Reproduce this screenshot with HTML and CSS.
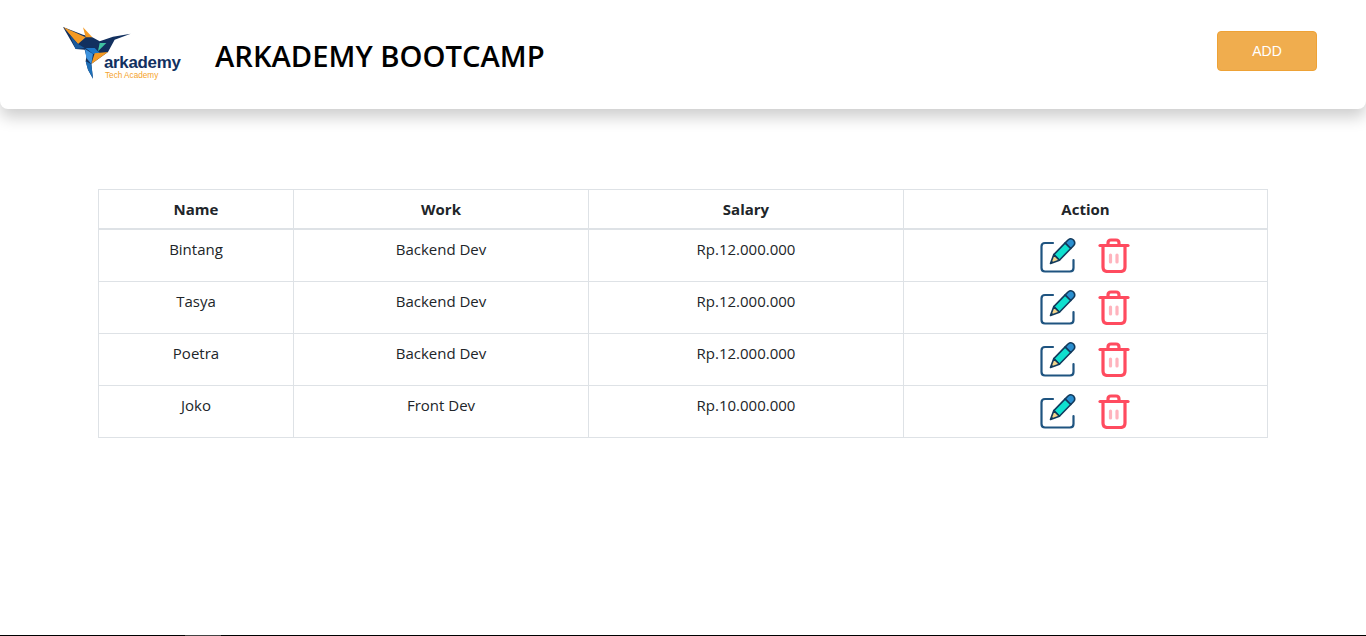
FILE: index.html
```html
<!DOCTYPE html>
<html lang="en">
<head>
<meta charset="utf-8">
<title>Arkademy Bootcamp</title>
<link rel="stylesheet" href="styles.css">
</head>
<body>
<div class="page">
<header class="topbar">
  <div class="logo">
    <svg class="bird" width="70" height="55" viewBox="40 37 210 165">
      <polygon points="40,37 100,60 128,68 150,80 190,66 243,57 195,75 175,112 150,130 125,148 130,192 115,165 108,140 110,125 105,105 78,103" fill="#12305f"/>
      <polygon points="42,38 108,68 85,88" fill="#f59a23"/>
      <polygon points="100,38 128,68 108,68" fill="#f59a23"/>
      <polygon points="60,62 85,88 105,100 78,103" fill="#1b5a9c"/>
      <polygon points="108,100 135,100 150,115 130,118" fill="#1f78c8"/>
      <polygon points="150,85 170,85 145,110" fill="#3fc3a2"/>
      <polygon points="135,116 175,112 150,130 125,148" fill="#f59a23"/>
      <polygon points="106,103 130,118 125,148 110,130" fill="#3d93de"/>
      <polygon points="108,140 125,148 130,192 115,165" fill="#1d6fb8"/>
    </svg>
    <span class="word">arkademy</span>
    <span class="tag">Tech Academy</span>
  </div>
  <h1 class="title">ARKADEMY BOOTCAMP</h1>
  <button class="add">ADD</button>
</header>
<main class="content">
  <table class="grid">
    <colgroup>
      <col class="c1"><col class="c2"><col class="c3"><col class="c4">
    </colgroup>
    <thead>
      <tr><th>Name</th><th>Work</th><th>Salary</th><th>Action</th></tr>
    </thead>
    <tbody>
      <tr><td>Bintang</td><td>Backend Dev</td><td>Rp.12.000.000</td><td class="act"><div class="icons">
        <svg class="ic" width="36" height="36" viewBox="0 0 36 36"><use href="#edit"/></svg>
        <svg class="ic" width="32" height="36" viewBox="0 -1 32 36"><use href="#trash"/></svg></div></td></tr>
      <tr><td>Tasya</td><td>Backend Dev</td><td>Rp.12.000.000</td><td class="act"><div class="icons">
        <svg class="ic" width="36" height="36" viewBox="0 0 36 36"><use href="#edit"/></svg>
        <svg class="ic" width="32" height="36" viewBox="0 -1 32 36"><use href="#trash"/></svg></div></td></tr>
      <tr><td>Poetra</td><td>Backend Dev</td><td>Rp.12.000.000</td><td class="act"><div class="icons">
        <svg class="ic" width="36" height="36" viewBox="0 0 36 36"><use href="#edit"/></svg>
        <svg class="ic" width="32" height="36" viewBox="0 -1 32 36"><use href="#trash"/></svg></div></td></tr>
      <tr><td>Joko</td><td>Front Dev</td><td>Rp.10.000.000</td><td class="act"><div class="icons">
        <svg class="ic" width="36" height="36" viewBox="0 0 36 36"><use href="#edit"/></svg>
        <svg class="ic" width="32" height="36" viewBox="0 -1 32 36"><use href="#trash"/></svg></div></td></tr>
    </tbody>
  </table>
</main>
<div class="baseline"><span class="thumb"></span></div>
</div>
<svg class="defs" width="0" height="0">
  <defs>
    <g id="edit">
      <path d="M13 6H5Q1.500 6 1.500 9.500V31Q1.500 34.500 5 34.500H30Q33.500 34.500 33.500 31V23" fill="none" stroke="#1f5480" stroke-width="2.200" stroke-linecap="round"/>
      <path d="M13.800 17.600L25.200 5.900L30.800 11.500L19.400 23.200Z" fill="#0fe0cf" stroke="#123a5c" stroke-width="1.600" stroke-linejoin="round"/>
      <path d="M25.200 5.900L28 3Q31 0.500 33.500 3Q36 6 33.500 8.700L30.800 11.500Z" fill="#2a8fd0" stroke="#123a5c" stroke-width="1.600" stroke-linejoin="round"/>
      <path d="M13.800 17.600L19.400 23.200L10.500 26.500Z" fill="#f4d58a" stroke="#123a5c" stroke-width="1.600" stroke-linejoin="round"/>
      <path d="M10.500 26.500L11.500 23.500L13.500 25.300Z" fill="#123a5c"/>
    </g>
    <g id="trash">
      <path d="M2 7.500H30" stroke="#ff4b5f" stroke-width="3.200" stroke-linecap="round" fill="none"/>
      <path d="M10 7V5Q10 2 13 2H18Q21 2 21 5V7" stroke="#ff4b5f" stroke-width="3.200" fill="none"/>
      <path d="M5 8V29Q5 33.500 9.500 33.500H22.500Q27 33.500 27 29V8" stroke="#ff4b5f" stroke-width="3.200" fill="none"/>
      <path d="M12.500 17V24M19 17V24" stroke="#ffb3bd" stroke-width="3.200" stroke-linecap="round" fill="none"/>
    </g>
  </defs>
</svg>
</body>
</html>
```
FILE: styles.css
```css
* { box-sizing: border-box; }
html, body { margin: 0; height: 100%; background: #fff; overflow: hidden; }
body { font-family: "Open Sans", "Noto Sans", sans-serif; color: #212529; }
.page { height: 636px; display: flex; flex-direction: column; }
.topbar {
  height: 109px;
  display: flex;
  align-items: center;
  padding: 0 49px 0 63px;
  background: #fff;
  border-radius: 0 0 8px 8px;
  box-shadow: 0 8px 16px rgba(0, 0, 0, 0.2);
}
.logo { position: relative; width: 119px; height: 56px; flex: none; }
.bird { display: block; }
.word {
  position: absolute; left: 41px; top: 26px;
  font: bold 16.900px/20px "Liberation Sans", sans-serif;
  letter-spacing: -0.3px;
  color: #12305f;
}
.tag {
  position: absolute; left: 42px; top: 44px;
  font: 8.200px/10px "Liberation Sans", sans-serif;
  color: #f5a32b;
}
.title {
  margin: 2px 0 0 33px;
  font-size: 29.200px;
  font-weight: 600;
  line-height: 40px;
  color: #000;
  flex: 1;
}
.add {
  width: 100px; height: 40px;
  margin-bottom: 8px;
  background: #f0ad4e;
  border: 1px solid #eea236;
  border-radius: 4px;
  color: #fff;
  font: 14px "Liberation Sans", sans-serif;
}
.content { flex: 1; padding: 80px 98px 0; }
.grid { width: 1169px; table-layout: fixed; border-collapse: collapse; font-size: 15px; }
.c1 { width: 195px; } .c2 { width: 295px; } .c3 { width: 315px; } .c4 { width: 364px; }
.grid th, .grid td { border: 1px solid #dee2e6; text-align: center; vertical-align: top; }
.grid th { height: 38px; border-bottom-width: 2px; font-weight: 700; line-height: 24px; padding: 7px 8px; }
.grid td { height: 52px; line-height: 24px; padding: 7px 8px 8px; }
.grid td.act { padding: 7px 0 0; }
.icons { display: flex; justify-content: center; gap: 22px; padding-right: 1px; }
.ic { display: block; }
.baseline { height: 1px; background: #000; position: relative; flex: none; }
.thumb { position: absolute; left: 185px; width: 36px; top: 0; height: 1px; background: #444; }
.defs { position: absolute; }
```
